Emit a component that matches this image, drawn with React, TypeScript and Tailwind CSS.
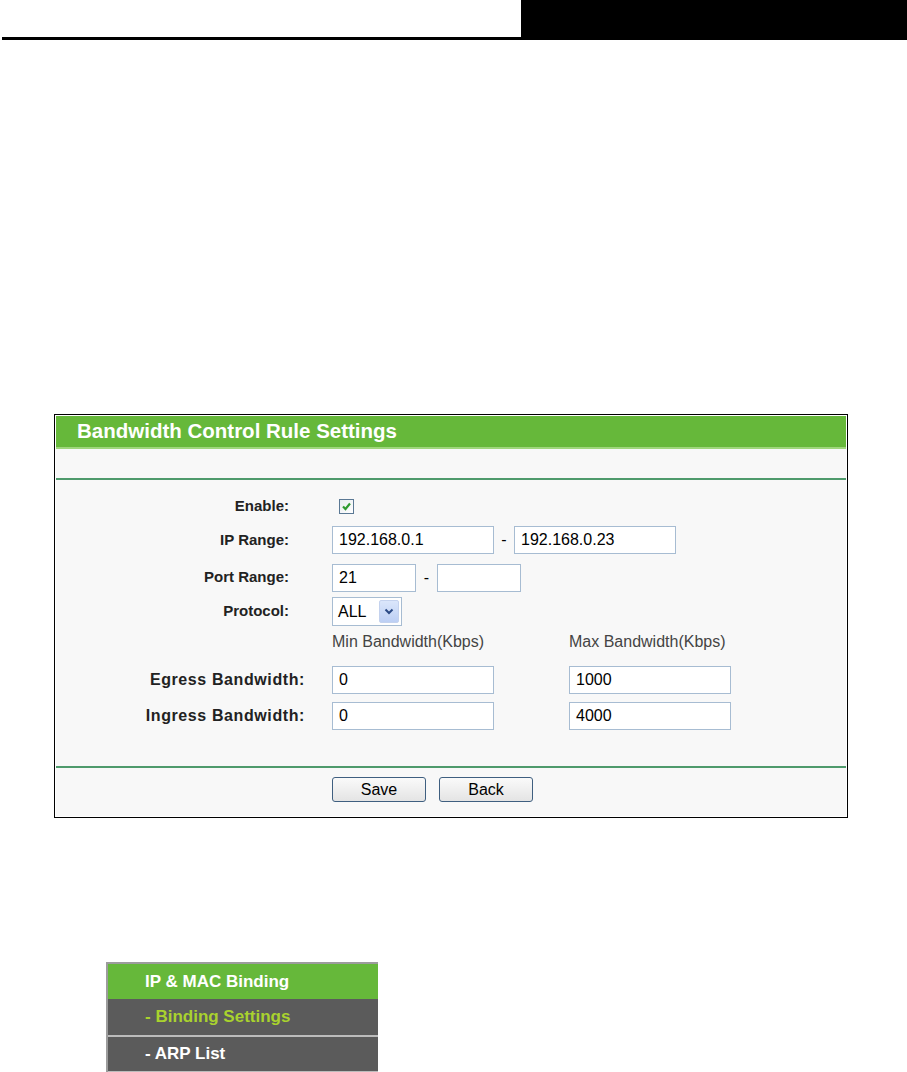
import React from "react";

const font = { fontFamily: '"Liberation Sans", Arial, sans-serif' };

function TextBox({ value, w }: { value: string; w: string }) {
  return (
    <div
      className={`${w} h-[28px] border border-[#a7bcd2] bg-white flex items-center pl-[6px] text-[16px] text-black`}
    >
      {value}
    </div>
  );
}

function Label({ children, w, size }: { children: React.ReactNode; w: string; size: string }) {
  return (
    <div className={`${w} ${size} shrink-0 text-right font-bold text-[#222]`}>{children}</div>
  );
}

function Btn({ children }: { children: React.ReactNode }) {
  return (
    <div className="w-[94px] h-[25px] rounded-[3px] border border-[#3f5f80] bg-gradient-to-b from-[#fafafa] to-[#e4e4e4] flex items-center justify-center text-[16px] text-black">
      {children}
    </div>
  );
}

export default function App() {
  return (
    <div className="w-[907px] h-[1072px] bg-white relative overflow-hidden" style={font}>
      {/* page header */}
      <div className="flex h-[37px]">
        <div className="w-[521px]" />
        <div className="flex-1 bg-black" />
      </div>
      <div className="ml-[2px] h-[3px] bg-black" />

      {/* panel */}
      <div className="mt-[374px] ml-[54px] w-[794px] h-[404px] border border-black p-[1px] bg-white">
        <div className="h-full bg-[#f8f8f8] flex flex-col">
          <div className="h-[33px] bg-[#66b83a] border-b-2 border-[#9fd67c] flex items-center pl-[21px] text-white font-bold text-[20.5px]">
            Bandwidth Control Rule Settings
          </div>
          <div className="h-[29px]" />
          <div className="h-[2px] bg-[#4f9a6c]" />

          {/* form */}
          <div className="flex flex-col pt-[16px]">
            <div className="flex items-center h-[20px]">
              <Label w="w-[233px]" size="text-[15px]">Enable:</Label>
              <div className="ml-[50px] w-[15px] h-[15px] border border-[#5a7894] bg-gradient-to-br from-[#e8ecef] to-[#ffffff] flex items-center justify-center">
                <svg width="11" height="11" viewBox="0 0 11 11">
                  <path d="M2 5.5 L4.5 8 L9 2.5" stroke="#2f9a2f" strokeWidth="2.2" fill="none" />
                </svg>
              </div>
            </div>
            <div className="flex items-center mt-[10px] h-[28px]">
              <Label w="w-[233px]" size="text-[15px]">IP Range:</Label>
              <div className="ml-[43px] flex items-center">
                <TextBox value="192.168.0.1" w="w-[162px]" />
                <span className="w-[20px] text-center text-[16px]">-</span>
                <TextBox value="192.168.0.23" w="w-[162px]" />
              </div>
            </div>
            <div className="flex items-center mt-[9px] h-[29px]">
              <Label w="w-[233px]" size="text-[15px]">Port Range:</Label>
              <div className="ml-[43px] flex items-center">
                <TextBox value="21" w="w-[84px]" />
                <span className="w-[21px] text-center text-[16px]">-</span>
                <TextBox value="" w="w-[84px]" />
              </div>
            </div>
            <div className="flex items-center mt-[5px] h-[29px]">
              <Label w="w-[233px]" size="text-[15px]">Protocol:</Label>
              <div className="ml-[43px] w-[70px] h-[29px] border border-[#a7bcd2] bg-white flex items-center pl-[5px] pr-[2px] justify-between">
                <span className="text-[16px] text-black">ALL</span>
                <div className="w-[20px] h-[23px] rounded-[2px] bg-gradient-to-b from-[#dbe6fb] to-[#bccff4] border border-[#c4d2ee] flex items-center justify-center">
                  <svg width="10" height="7" viewBox="0 0 10 7">
                    <path d="M1.5 1.5 L5 5 L8.5 1.5" stroke="#2b4a86" strokeWidth="2" fill="none" />
                  </svg>
                </div>
              </div>
            </div>
            <div className="flex items-center mt-[6px] h-[20px] text-[16px] text-[#444]">
              <div className="w-[276px]" />
              <div className="w-[237px]">Min Bandwidth(Kbps)</div>
              <div>Max Bandwidth(Kbps)</div>
            </div>
            <div className="flex items-center mt-[14px] h-[28px]">
              <Label w="w-[249px]" size="text-[16px] tracking-[0.6px]">Egress Bandwidth:</Label>
              <div className="ml-[27px] flex items-center gap-[75px]">
                <TextBox value="0" w="w-[162px]" />
                <TextBox value="1000" w="w-[162px]" />
              </div>
            </div>
            <div className="flex items-center mt-[8px] h-[28px]">
              <Label w="w-[249px]" size="text-[16px] tracking-[0.6px]">Ingress Bandwidth:</Label>
              <div className="ml-[27px] flex items-center gap-[75px]">
                <TextBox value="0" w="w-[162px]" />
                <TextBox value="4000" w="w-[162px]" />
              </div>
            </div>
          </div>

          <div className="mt-[36px] h-[2px] bg-[#4f9a6c]" />
          <div className="flex items-center gap-[13px] pl-[276px] pt-[9px]">
            <Btn>Save</Btn>
            <Btn>Back</Btn>
          </div>
        </div>
      </div>

      {/* menu */}
      <div className="mt-[144px] ml-[106px] w-[272px] border-l-2 border-[#9c9c9c] border-t-2 border-t-[#9c9c9c]">
        <div className="h-[35px] bg-[#66b83a] flex items-center pl-[37px] text-white font-bold text-[17px]">
          IP &amp; MAC Binding
        </div>
        <div className="h-[36px] bg-[#5b5b5b] flex items-center pl-[37px] text-[#a9d22e] font-bold text-[17px]">
          - Binding Settings
        </div>
        <div className="h-[2px] bg-[#bcbcbc]" />
        <div className="h-[34px] bg-[#5b5b5b] flex items-center pl-[37px] text-white font-bold text-[17px]">
          - ARP List
        </div>
        <div className="h-[2px] bg-[#bcbcbc]" />
      </div>
    </div>
  );
}
